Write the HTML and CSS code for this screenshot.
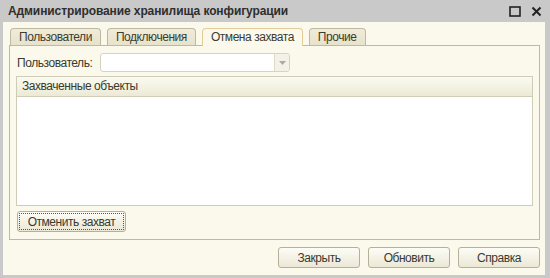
FILE: index.html
```html
<!DOCTYPE html>
<html lang="ru">
<head>
<meta charset="UTF-8">
<title>Администрирование хранилища конфигурации</title>
<link rel="stylesheet" href="styles.css">
</head>
<body>
<div class="window">
  <div class="titlebar">
    <span class="title">Администрирование хранилища конфигурации</span>
    <div class="controls">
      <svg width="12" height="11" viewBox="0 0 12 11"><rect x="1" y="1" width="10" height="9" fill="none" stroke="#222" stroke-width="1.6"/></svg>
      <svg width="11" height="11" viewBox="0 0 11 11"><path d="M1.5 1.5 L9.5 9.5 M9.5 1.5 L1.5 9.5" stroke="#222" stroke-width="2"/></svg>
    </div>
  </div>
  <div class="content">
    <div class="tabs">
      <div class="tab">Пользователи</div>
      <div class="tab">Подключения</div>
      <div class="tab active">Отмена захвата</div>
      <div class="tab">Прочие</div>
    </div>
    <div class="panel">
      <div class="user-row">
        <span class="label">Пользователь:</span>
        <div class="combo">
          <div class="combo-field"></div>
          <div class="combo-btn"><svg width="7" height="4" viewBox="0 0 7 4"><path d="M0 0 L7 0 L3.5 4 Z" fill="#aaa"/></svg></div>
        </div>
      </div>
      <div class="grid">
        <div class="grid-head">Захваченные объекты</div>
        <div class="grid-body"></div>
      </div>
      <div class="panel-actions">
        <button class="btn focused">Отменить захват</button>
      </div>
    </div>
    <div class="footer">
      <button class="btn wide">Закрыть</button>
      <button class="btn wide">Обновить</button>
      <button class="btn wide">Справка</button>
    </div>
  </div>
</div>
</body>
</html>
```
FILE: styles.css
```css
body { margin: 0; font-family: "Liberation Sans", Arial, sans-serif; font-size: 12px; letter-spacing: -0.45px; color: #3a3a2e; }
.window { width: 550px; height: 278px; background: #c9c9c9; display: flex; flex-direction: column; box-sizing: border-box; padding: 0 5px 3px 3px; }
.titlebar { height: 22px; flex-shrink: 0; display: flex; align-items: center; justify-content: space-between; padding-left: 5px; }
.title { font-weight: bold; font-size: 12px; color: #2e2e2e; letter-spacing: -0.1px; }
.controls { display: flex; gap: 10px; align-items: center; padding-right: 3px; }
.content { flex: 1; background: #fbf9ec; display: flex; flex-direction: column; padding: 6px 5px 0 6px; }
.tabs { display: flex; gap: 6px; padding-left: 1px; height: 17px; flex-shrink: 0; position: relative; z-index: 1; }
.tab { padding: 0 8px; line-height: 16px; background: linear-gradient(#f0ecda, #e6e2cb); border: 1px solid #bdb9a2; border-bottom: none; border-radius: 4px 4px 0 0; color: #3c3c30; white-space: nowrap; }
.tab.active { background: #fbf9ec; border-color: #e2cc98; height: 17px; }
.panel { border: 1px solid #bdb9a2; height: 195px; flex-shrink: 0; box-sizing: border-box; padding: 7px 6px 6px 6px; display: flex; flex-direction: column; }
.user-row { display: flex; align-items: center; gap: 8px; padding-left: 1px; }
.combo { display: flex; width: 190px; height: 19px; border: 1px solid #d6d3c2; border-radius: 3px; background: #fff; box-sizing: border-box; }
.combo-field { flex: 1; }
.combo-btn { width: 14px; border-left: 1px solid #dedbcb; background: #f4f2e6; display: flex; align-items: center; justify-content: center; border-radius: 0 3px 3px 0; }
.grid { margin-top: 4px; height: 130px; flex-shrink: 0; border: 1px solid #cfccb8; display: flex; flex-direction: column; box-sizing: border-box; }
.grid-head { height: 20px; line-height: 19px; padding-left: 5px; background: linear-gradient(#fbfaf1, #ecead5); border-bottom: 1px solid #cfccb8; box-sizing: border-box; }
.grid-body { flex: 1; background: #fff; }
.panel-actions { margin-top: 5px; padding-left: 1px; }
.btn { font-family: "Liberation Sans", Arial, sans-serif; font-size: 12px; letter-spacing: -0.45px; color: #3a3a2e; height: 21px; padding: 0 8px; white-space: nowrap; background: linear-gradient(#fdfcf6, #ebe8d6); border: 1px solid #b4b09a; border-radius: 3px; }
.btn.focused { outline: 1px dotted #555; outline-offset: -3px; width: 109px; }
.footer { display: flex; justify-content: flex-end; gap: 8px; padding-top: 7px; }
.btn.wide { width: 82px; }
```
